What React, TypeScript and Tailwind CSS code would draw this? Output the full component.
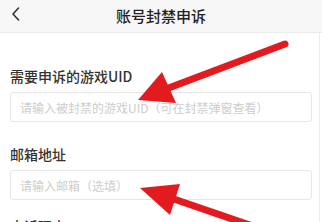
import React from "react";

function Field({ label, placeholder, className }: { label: string; placeholder: string; className?: string }) {
  return (
    <div className={className}>
      <div className="text-[14px] leading-[20px] font-medium text-[#333]">{label}</div>
      <input
        className="mt-[6px] block h-[30px] w-full rounded-[3px] border border-[#e6e6e6] bg-white px-[9px] text-[12px] outline-none placeholder:text-[#cdcdcd]"
        placeholder={placeholder}
      />
    </div>
  );
}

export default function App() {
  return (
    <div className="relative h-[222px] w-[322px] overflow-hidden bg-white font-['Noto_Sans_CJK_SC',sans-serif]">
      <header className="relative flex h-[33px] items-center justify-center border-b border-[#ebebeb] bg-[#f7f7f7]">
        <svg className="absolute left-[11px] top-[7px]" width="10" height="14" viewBox="0 0 10 14" fill="none">
          <path d="M7.5 1 L2 7 L7.5 13" stroke="#333" strokeWidth="1.6" strokeLinecap="round" strokeLinejoin="round" />
        </svg>
        <h1 className="text-[15px] font-medium text-[#222]">账号封禁申诉</h1>
      </header>

      <main className="w-[320px] border-r border-[#ececec] pl-[10px] pr-[7px] pt-[33px] pb-4">
        <Field label="需要申诉的游戏UID" placeholder="请输入被封禁的游戏UID（可在封禁弹窗查看）" />
        <Field className="mt-[22px]" label="邮箱地址" placeholder="请输入邮箱（选填）" />
        <div className="mt-[16px] text-[14px] leading-[20px] font-medium text-[#333]">申诉理由</div>
      </main>

      {/* annotation arrows */}
      <svg className="pointer-events-none absolute inset-0" width="322" height="222" viewBox="0 0 322 222">
        <line x1="285" y1="44" x2="158" y2="92" stroke="#e31b1f" strokeWidth="7" strokeLinecap="round" />
        <polygon points="138,100 162,72 176,103" fill="#e31b1f" />
        <line x1="168" y1="197" x2="305" y2="244" stroke="#e31b1f" strokeWidth="7" strokeLinecap="round" />
        <polygon points="140,188 180,184 170,215" fill="#e31b1f" />
      </svg>
    </div>
  );
}
